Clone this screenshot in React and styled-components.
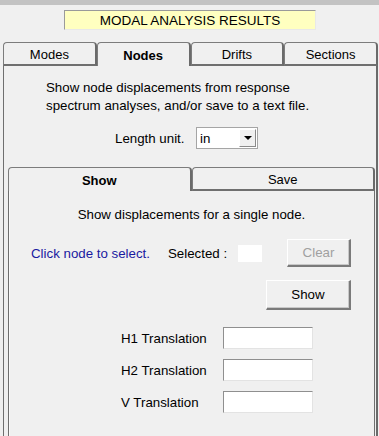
import { Fragment } from "react";
import styled, { createGlobalStyle } from "styled-components";

const Global = createGlobalStyle`
  html, body {
    margin: 0;
    padding: 0;
    background: #f0f0f0;
  }
  body {
    font-family: "Liberation Sans", Arial, sans-serif;
    font-size: 13.3px;
    color: #000;
  }
`;

const Window = styled.div`
  width: 379px;
  height: 436px;
  overflow: hidden;
  background: #f0f0f0;
`;

const TopStrip = styled.div`
  height: 5px;
  background: #c3c3c3;
`;

const TitleBox = styled.div`
  box-sizing: border-box;
  margin: 5px 0 0 64px;
  width: 252px;
  height: 20px;
  background: #ffffc0;
  border-top: 1px solid #9a9a9a;
  border-left: 1px solid #9a9a9a;
  border-bottom: 1px solid #e8e8e8;
  border-right: 1px solid #e8e8e8;
  display: flex;
  align-items: center;
  justify-content: center;
  font-size: 13.5px;
`;

const TabRow = styled.div`
  display: flex;
  margin: ${({ $inner }) => ($inner ? "0" : "12px 1px 0 3px")};
  height: 24px;
`;

const Tab = styled.div`
  box-sizing: border-box;
  flex: 1;
  display: flex;
  align-items: center;
  justify-content: center;
  border: 1px solid #7c7c7c;
  border-right: 2px solid #6a6a6a;
  border-bottom: ${({ $active }) => ($active ? "none" : "2px solid #6f6f6f")};
  border-radius: 4px 4px 0 0;
  background: #f0f0f0;
  font-size: 13px;
  font-weight: ${({ $active }) => ($active ? "bold" : "normal")};
  padding-top: 1px;
`;

const Panel = styled.div`
  box-sizing: border-box;
  margin-left: 3px;
  width: 375px;
  height: 380px;
  border-left: 1px solid #6f6f6f;
  border-right: 2px solid #6a6a6a;
  display: flex;
  flex-direction: column;
`;

const Intro = styled.p`
  margin: 13px 0 0 42px;
  line-height: 18px;
`;

const UnitRow = styled.div`
  display: flex;
  align-items: center;
  margin: 12px 0 0 111px;
`;

const UnitLabel = styled.span`
  width: 81px;
`;

const Select = styled.div`
  box-sizing: border-box;
  width: 62px;
  height: 22px;
  background: #fff;
  border: 1px solid #a5a5a5;
  display: flex;
  align-items: center;
  padding: 1px;
`;

const SelectValue = styled.span`
  flex: 1;
  padding-left: 2px;
`;

const DropButton = styled.div`
  box-sizing: border-box;
  width: 17px;
  height: 18px;
  background: #f0f0f0;
  border: 1px solid #fff;
  border-right-color: #8a8a8a;
  border-bottom-color: #8a8a8a;
  display: flex;
  align-items: center;
  justify-content: center;
`;

const Arrow = styled.div`
  width: 0;
  height: 0;
  border-left: 4px solid transparent;
  border-right: 4px solid transparent;
  border-top: 4px solid #000;
`;

const Inner = styled.div`
  margin: 18px 1px 0 4px;
  display: flex;
  flex-direction: column;
  flex: 1;
`;

const InnerPanel = styled.div`
  flex: 1;
  border-left: 1px solid #6f6f6f;
  border-right: 1px solid #6f6f6f;
  box-shadow: inset 1px 0 0 #fafafa;
  display: flex;
  flex-direction: column;
`;

const Caption = styled.div`
  margin-top: 15px;
  text-align: center;
  line-height: 18px;
`;

const SelectRow = styled.div`
  display: flex;
  align-items: center;
  margin: 15px 0 0 22px;
`;

const Hint = styled.span`
  color: #1a1aa0;
  width: 137px;
`;

const Selected = styled.span`
  width: 70px;
`;

const NodeBox = styled.div`
  width: 24px;
  height: 17px;
  background: #fff;
  margin-right: 25px;
`;

const Button = styled.div`
  box-sizing: border-box;
  width: ${({ $w }) => $w}px;
  height: ${({ $h }) => $h}px;
  display: flex;
  align-items: center;
  justify-content: center;
  background: #f0f0f0;
  border: 1px solid #fff;
  border-right: 2px solid #7a7a7a;
  border-bottom: 2px solid #7a7a7a;
  box-shadow: inset -1px -1px 0 #c8c8c8;
  color: ${({ $disabled }) => ($disabled ? "#a0a0a0" : "#000")};
`;

const ShowRow = styled.div`
  display: flex;
  justify-content: flex-end;
  margin: 13px 23px 0 0;
`;

const Grid = styled.div`
  display: grid;
  grid-template-columns: 102px 90px;
  row-gap: 10px;
  margin: 17px 0 0 112px;
  align-items: center;
`;

const Field = styled.div`
  box-sizing: border-box;
  height: 22px;
  background: #fff;
  border-top: 1px solid #8f8f8f;
  border-left: 1px solid #8f8f8f;
  border-right: 1px solid #e3e3e3;
  border-bottom: 1px solid #e3e3e3;
`;

const outerTabs = ["Modes", "Nodes", "Drifts", "Sections"];
const fields = ["H1 Translation", "H2 Translation", "V Translation"];

export default function App() {
  return (
    <Window>
      <Global />
      <TopStrip />
      <TitleBox>MODAL ANALYSIS RESULTS</TitleBox>
      <TabRow>
        {outerTabs.map((t) => (
          <Tab key={t} $active={t === "Nodes"}>
            {t}
          </Tab>
        ))}
      </TabRow>
      <Panel>
        <Intro>
          Show node displacements from response
          <br />
          spectrum analyses, and/or save to a text file.
        </Intro>
        <UnitRow>
          <UnitLabel>Length unit.</UnitLabel>
          <Select>
            <SelectValue>in</SelectValue>
            <DropButton>
              <Arrow />
            </DropButton>
          </Select>
        </UnitRow>
        <Inner>
          <TabRow $inner>
            <Tab $active>Show</Tab>
            <Tab>Save</Tab>
          </TabRow>
          <InnerPanel>
            <Caption>Show displacements for a single node.</Caption>
            <SelectRow>
              <Hint>Click node to select.</Hint>
              <Selected>Selected :</Selected>
              <NodeBox />
              <Button $w={64} $h={28} $disabled>
                Clear
              </Button>
            </SelectRow>
            <ShowRow>
              <Button $w={85} $h={30}>
                Show
              </Button>
            </ShowRow>
            <Grid>
              {fields.map((f) => (
                <Fragment key={f}>
                  <span>{f}</span>
                  <Field />
                </Fragment>
              ))}
            </Grid>
          </InnerPanel>
        </Inner>
      </Panel>
    </Window>
  );
}
